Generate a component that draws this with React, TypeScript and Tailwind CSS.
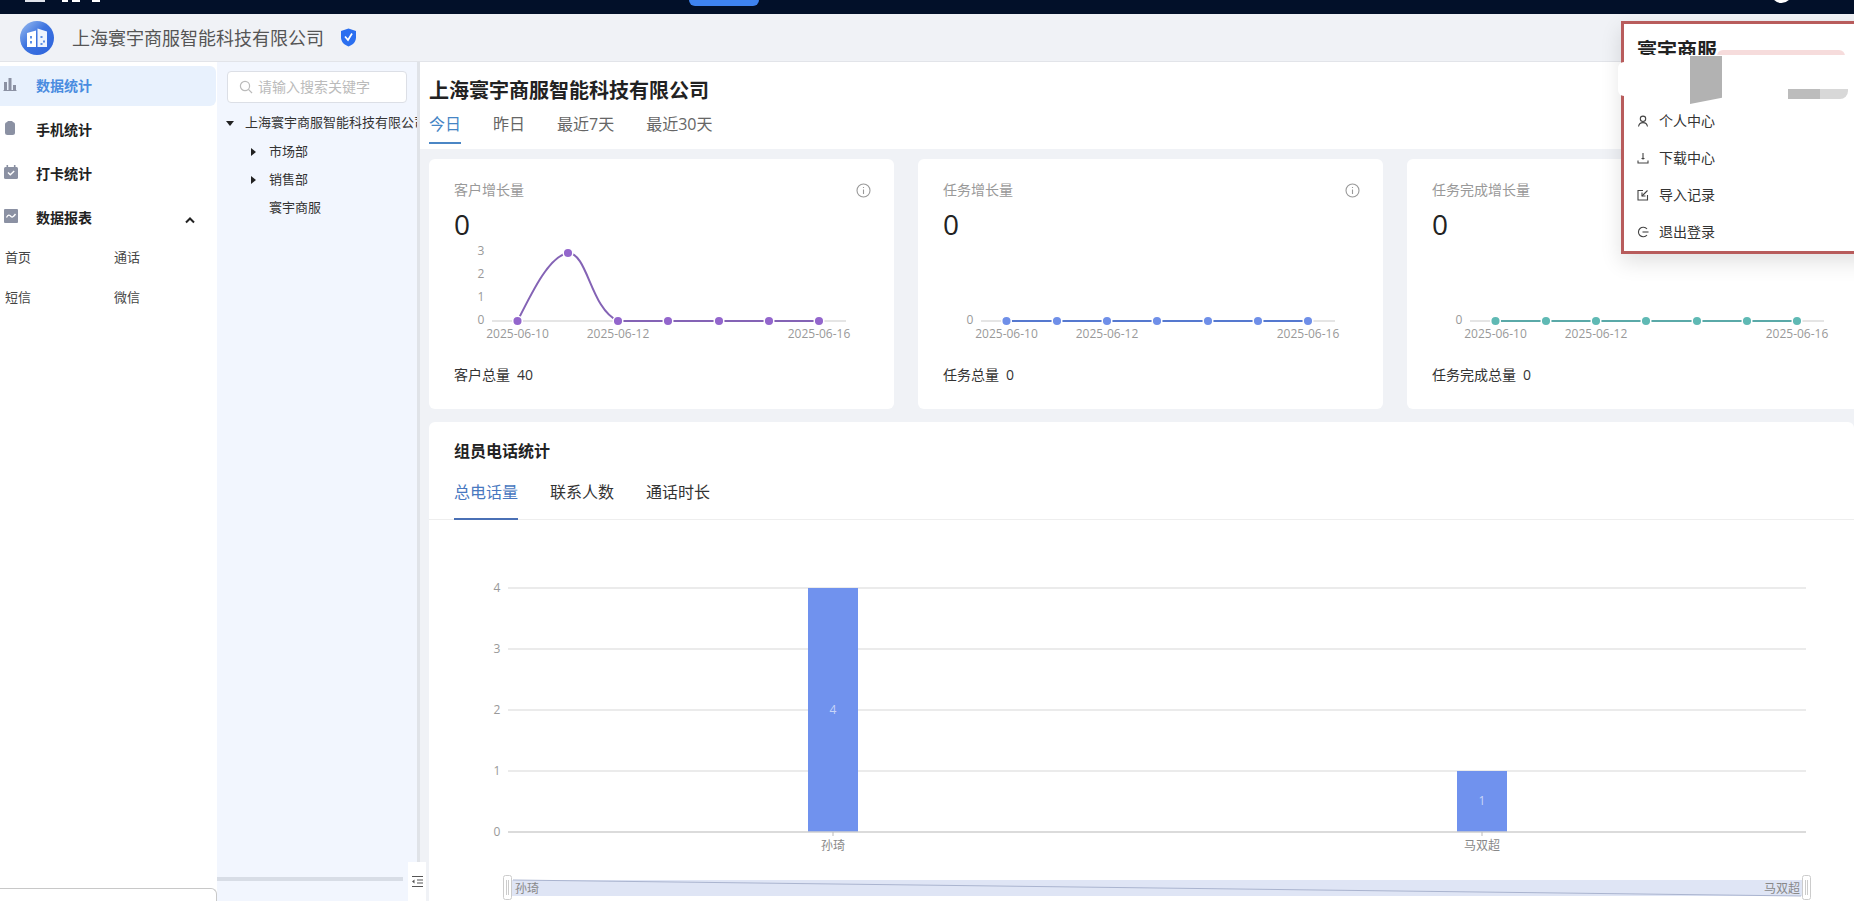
import type { ReactNode } from "react"

const font = "font-['Open_Sans','Noto_Sans_CJK_SC',sans-serif]"

function BarIcon() {
  return (
    <svg width="14" height="14" viewBox="0 0 14 14" className="fill-[#8b91a3]">
      <rect x="1" y="5" width="3" height="8" />
      <rect x="5.5" y="1" width="3" height="12" />
      <rect x="10" y="8" width="3" height="5" />
      <rect x="0.5" y="13" width="13" height="1" />
    </svg>
  )
}

function PhoneIcon() {
  return (
    <svg width="14" height="16" viewBox="0 0 14 16">
      <rect x="2" y="2" width="10" height="13" rx="2.5" fill="#8b91a3" />
      <rect x="4.5" y="1" width="5" height="1.6" fill="#8b91a3" />
    </svg>
  )
}

function CalendarIcon() {
  return (
    <svg width="16" height="16" viewBox="0 0 16 16">
      <rect x="1" y="3" width="14" height="12" rx="1.5" fill="#8b91a3" />
      <rect x="3.5" y="1" width="1.6" height="3" fill="#8b91a3" />
      <rect x="10.9" y="1" width="1.6" height="3" fill="#8b91a3" />
      <path d="M5 8.5 L7.3 10.8 L11.2 7" stroke="#fff" strokeWidth="1.4" fill="none" />
    </svg>
  )
}

function TrendIcon() {
  return (
    <svg width="16" height="16" viewBox="0 0 16 16">
      <rect x="1" y="1" width="14" height="14" rx="1" fill="#8b91a3" />
      <path d="M3.5 9.5 C5 6.5 6.5 6.5 8 8.5 C9.5 10 11 8 12.5 6" stroke="#fff" strokeWidth="1.3" fill="none" />
    </svg>
  )
}

function SideItem({ icon, label, active, children }: { icon: ReactNode; label: string; active?: boolean; children?: ReactNode }) {
  return (
    <div className={`flex h-10 items-center rounded-r-md ${active ? "bg-[#e8f1fd] text-[#4a8ce0]" : "text-[#222]"}`}>
      <span className="flex w-[36px] shrink-0 justify-start pb-1 pl-[3px]">{icon}</span>
      <span className="text-sm font-bold">{label}</span>
      {children}
    </div>
  )
}

function InfoIcon() {
  return (
    <svg width="15" height="15" viewBox="0 0 15 15" fill="none" stroke="#999" strokeWidth="1.1" className="-mr-[2px]">
      <circle cx="7.5" cy="7.5" r="6.5" />
      <path d="M7.5 6.5V11" />
      <path d="M7.5 4V5" />
    </svg>
  )
}

const dotXs = [517.5, 568, 618, 668, 719, 769, 819]

function MiniChart({ color, line, path, peak }: { color: string; line: string; path?: string; peak?: boolean }) {
  return (
    <svg viewBox="429 248 465 100" width="465" height="100" className="-ml-[25px] block overflow-visible">
      <line x1="492" x2="846" y1="321" y2="321" stroke="#dcdcdc" strokeWidth="1.5" />
      {peak ? (
        <g fill="#999" fontSize="12" textAnchor="middle">
          <text x="481" y="255">3</text>
          <text x="481" y="278">2</text>
          <text x="481" y="301">1</text>
        </g>
      ) : null}
      <text x="481" y="324" fill="#999" fontSize="12" textAnchor="middle">0</text>
      <path d={path ?? "M517.5 321H819"} fill="none" stroke={line} strokeWidth="2" />
      {dotXs.map((x, i) => (
        <circle key={x} cx={x} cy={peak && i === 1 ? 253 : 321} r="4.8" fill={color} stroke="#fff" strokeWidth="1.5" />
      ))}
      <g fill="#999" fontSize="12" textAnchor="middle">
        <text x="517.5" y="338">2025-06-10</text>
        <text x="618" y="338">2025-06-12</text>
        <text x="819" y="338">2025-06-16</text>
      </g>
    </svg>
  )
}

function StatCard({ title, totalLabel, total, children }: { title: string; totalLabel: string; total: string; children: ReactNode }) {
  return (
    <div className="h-[250px] w-[465px] shrink-0 rounded-md bg-white px-[25px] pt-[21px]">
      <div className="flex h-5 items-center justify-between text-sm text-[#999]">
        <span>{title}</span>
        <InfoIcon />
      </div>
      <div className="mt-[2px] mb-[2px] h-11 text-[28px] leading-[44px] text-[#222]">0</div>
      {children}
      <div className="mt-[17px] flex gap-[7px] text-sm leading-5 text-[#333]">
        <span>{totalLabel}</span>
        <span>{total}</span>
      </div>
    </div>
  )
}

function BarChart() {
  const grid = [
    { label: "4", y: 588 },
    { label: "3", y: 649 },
    { label: "2", y: 710 },
    { label: "1", y: 771 },
  ]
  return (
    <svg viewBox="429 520 1425 381" width="1425" height="381" className="block">
      {grid.map((g) => (
        <g key={g.label}>
          <line x1="508" x2="1806" y1={g.y} y2={g.y} stroke="#e4e4e4" strokeWidth="1.5" />
          <text x="497" y={g.y + 4} fill="#999" fontSize="12" textAnchor="middle">{g.label}</text>
        </g>
      ))}
      <rect x="808" y="588" width="50" height="244" fill="#7092ee" />
      <rect x="1457" y="771" width="50" height="61" fill="#7092ee" />
      <text x="833" y="714" fill="#c8d5f8" fontSize="12" textAnchor="middle">4</text>
      <text x="1482" y="805" fill="#c8d5f8" fontSize="12" textAnchor="middle">1</text>
      <line x1="508" x2="1806" y1="832" y2="832" stroke="#cfcfcf" strokeWidth="1.5" />
      <text x="497" y="836" fill="#999" fontSize="12" textAnchor="middle">0</text>
      <line x1="833" x2="833" y1="832" y2="836" stroke="#bbb" />
      <line x1="1482" x2="1482" y1="832" y2="836" stroke="#bbb" />
      <text x="833" y="850" fill="#888" fontSize="12" textAnchor="middle">孙琦</text>
      <text x="1482" y="850" fill="#888" fontSize="12" textAnchor="middle">马双超</text>
      <rect x="508" y="880" width="1298" height="16" fill="#dfe5f5" />
      <path d="M513 880 L1801 896" stroke="#aab4cf" strokeWidth="1" />
      <text x="515" y="893" fill="#888" fontSize="12">孙琦</text>
      <text x="1800" y="893" fill="#888" fontSize="12" textAnchor="end">马双超</text>
      <rect x="503.5" y="875.5" width="8" height="24" rx="2" fill="#fff" stroke="#ccc" />
      <path d="M506.5 880V895M508.5 880V895" stroke="#ccc" />
      <rect x="1802.5" y="875.5" width="8" height="24" rx="2" fill="#fff" stroke="#ccc" />
      <path d="M1805.5 880V895M1807.5 880V895" stroke="#ccc" />
    </svg>
  )
}

function MenuIcon({ children }: { children: ReactNode }) {
  return (
    <svg width="12" height="12" viewBox="0 0 12 12" fill="none" stroke="#444" strokeWidth="1.1">
      {children}
    </svg>
  )
}

function MenuRow({ icon, label }: { icon: ReactNode; label: string }) {
  return (
    <div className="flex h-[37px] items-center gap-[10px] text-sm text-[#333]">
      <span className="flex w-[12px] justify-center">{icon}</span>
      <span>{label}</span>
    </div>
  )
}

export default function App() {
  return (
    <div className={`relative h-[901px] w-[1854px] overflow-hidden bg-[#f0f2f6] ${font}`}>
      <div className="relative h-[14px] bg-[#021029]">
        <div className="absolute left-[25px] top-0 flex gap-[4px]">
          <span className="mr-[13px] h-[1.5px] w-[20px] bg-[#dfe3ea]" />
          <span className="h-[1.5px] w-[6px] bg-white" />
          <span className="mr-[8px] h-[1.5px] w-[8px] bg-white" />
          <span className="h-[1.5px] w-[8px] bg-white" />
        </div>
        <div className="absolute left-[689px] top-0 h-[6px] w-[70px] rounded-b-md bg-[#3e83f0]" />
        <div className="absolute left-[1771px] top-[-18px] h-[21px] w-[21px] rounded-full bg-white" />
      </div>

      <header className="flex h-[48px] items-center border-b border-[#e2e4e9] pl-[20px]">
        <svg width="34" height="34" viewBox="0 0 34 34">
          <defs>
            <linearGradient id="logo" x1="0" y1="0" x2="1" y2="1">
              <stop offset="0" stopColor="#9fc0f0" />
              <stop offset="0.45" stopColor="#3d74e0" />
              <stop offset="1" stopColor="#2c62dc" />
            </linearGradient>
          </defs>
          <circle cx="17" cy="17" r="17" fill="url(#logo)" />
          <path d="M7 12L16 9.5V26H7Z" fill="#fff" />
          <path d="M17.5 7.5L27 10.5V26H17.5Z" fill="#fff" fillOpacity="0.92" />
          <rect x="10" y="15" width="2" height="2.5" fill="#5d8fe6" />
          <rect x="10" y="20" width="2" height="2.5" fill="#5d8fe6" />
          <rect x="20.5" y="15" width="2" height="2" fill="#5d8fe6" />
          <rect x="23" y="19.5" width="2" height="2" fill="#5d8fe6" />
          <rect x="20.5" y="22" width="2" height="2" fill="#5d8fe6" />
        </svg>
        <span className="ml-[18px] text-lg text-[#555]">上海寰宇商服智能科技有限公司</span>
        <svg width="17" height="19" viewBox="0 0 17 19" className="ml-[16px]">
          <path d="M8.5 0.5L16 3V9.5C16 14 12.5 17 8.5 18.5C4.5 17 1 14 1 9.5V3Z" fill="#2b6ff0" />
          <path d="M5 8.5L8 12L12 5.5" stroke="#fff" strokeWidth="1.7" fill="none" />
        </svg>
      </header>

      <div className="flex h-[839px]">
        <aside className="flex w-[217px] shrink-0 flex-col bg-white pt-1">
          <div className="flex flex-col gap-1 pr-px">
            <SideItem icon={<BarIcon />} label="数据统计" active />
            <SideItem icon={<PhoneIcon />} label="手机统计" />
            <SideItem icon={<CalendarIcon />} label="打卡统计" />
            <SideItem icon={<TrendIcon />} label="数据报表">
              <svg width="12" height="8" viewBox="0 0 12 8" className="ml-[92px] mt-[3px]" fill="none" stroke="#222" strokeWidth="2">
                <path d="M2 6.5L6 2.5L10 6.5" />
              </svg>
            </SideItem>
          </div>
          <div className="grid grid-cols-[109px_1fr] text-[13px] text-[#444]">
            <span className="flex h-10 items-center pl-[5px]">首页</span>
            <span className="flex h-10 items-center pl-[5px]">通话</span>
            <span className="flex h-10 items-center pl-[5px]">短信</span>
            <span className="flex h-10 items-center pl-[5px]">微信</span>
          </div>
          <div className="mt-auto h-[13px] rounded-tr-md border-t border-r border-[#c8c8c8]" />
        </aside>

        <section className="relative w-[201px] shrink-0 overflow-hidden bg-[#f2f6fe] pt-[9px]">
          <div className="mx-[10px] flex h-8 w-[180px] items-center gap-[5px] rounded border border-[#dcdfe6] bg-white pl-[11px] text-sm text-[#bbb]">
            <svg width="14" height="14" viewBox="0 0 14 14" fill="none" stroke="#bbb" strokeWidth="1.2">
              <circle cx="6" cy="6" r="4.6" />
              <path d="M9.4 9.4L13 13" />
            </svg>
            <span>请输入搜索关键字</span>
          </div>
          <div className="mt-[5px] text-[13px] text-[#333]">
            <div className="flex h-[30px] items-center overflow-hidden whitespace-nowrap pl-[9px]">
              <span className="mr-[11px] h-0 w-0 shrink-0 border-x-[4px] border-t-[5px] border-x-transparent border-t-[#222]" />
              <span>上海寰宇商服智能科技有限公司</span>
            </div>
            <div className="flex h-[28px] items-center pl-[34px]">
              <span className="mr-[13px] h-0 w-0 border-y-[4px] border-l-[5px] border-y-transparent border-l-[#222]" />
              <span>市场部</span>
            </div>
            <div className="flex h-[28px] items-center pl-[34px]">
              <span className="mr-[13px] h-0 w-0 border-y-[4px] border-l-[5px] border-y-transparent border-l-[#222]" />
              <span>销售部</span>
            </div>
            <div className="flex h-[28px] items-center pl-[52px]">寰宇商服</div>
          </div>
          <div className="absolute bottom-[20px] left-0 h-[4px] w-[186px] bg-[#d8dde6]" />
        </section>

        <main className="relative min-w-0 flex-1">
          <div className="absolute left-[-1px] top-0 h-full w-[3px] bg-[#e0e3e8]" />
          <div className="absolute bottom-0 left-[-10px] z-10 flex h-[39px] w-[18px] items-center justify-center bg-white">
            <svg width="13" height="13" viewBox="0 0 13 13" stroke="#555" strokeWidth="1.2" fill="#555">
              <path d="M1 1.5H12M6 5H12M6 8H12M1 11.5H12" fill="none" />
              <path d="M3.5 4.5L1 6.5L3.5 8.5Z" strokeWidth="0" />
            </svg>
          </div>

          <div className="ml-[2px] h-[87px] bg-white pl-[9px] pt-[15px]">
            <h1 className="text-xl font-bold leading-7 text-[#222]">上海寰宇商服智能科技有限公司</h1>
            <div className="mt-[5px] flex gap-8 text-base text-[#666]">
              <div className="flex h-[34px] flex-col justify-between text-[#4585c5]">
                <span className="leading-[28px]">今日</span>
                <span className="h-[2px] bg-[#4a86c5]" />
              </div>
              <span className="leading-[28px]">昨日</span>
              <span className="leading-[28px]">最近7天</span>
              <span className="leading-[28px]">最近30天</span>
            </div>
          </div>

          <div className="ml-[11px] mt-[10px] flex gap-6">
            <StatCard title="客户增长量" totalLabel="客户总量" total="40">
              <MiniChart color="#9366cc" line="#8463b5" peak path="M517.5 321 C534 288 550 256 568 253 C588 253 590 308 618 321 H819" />
            </StatCard>
            <StatCard title="任务增长量" totalLabel="任务总量" total="0">
              <MiniChart color="#6f8fe8" line="#5578cf" />
            </StatCard>
            <StatCard title="任务完成增长量" totalLabel="任务完成总量" total="0">
              <MiniChart color="#5fb9b4" line="#5aa9a8" />
            </StatCard>
          </div>

          <div className="ml-[11px] mt-[13px] h-[479px] rounded-t-md bg-white">
            <div className="h-[98px] border-b border-[#eeeeee] pl-[25px] pt-[17px]">
              <h2 className="text-base font-bold leading-6 text-[#222]">组员电话统计</h2>
              <div className="mt-[17px] flex gap-8 text-base text-[#333]">
                <div className="flex h-[40px] flex-col justify-between text-[#4878c0]">
                  <span className="leading-6">总电话量</span>
                  <span className="h-[2px] bg-[#4a70b5]" />
                </div>
                <span className="leading-6">联系人数</span>
                <span className="leading-6">通话时长</span>
              </div>
            </div>
            <BarChart />
          </div>
        </main>
      </div>

      <div className="absolute left-[1621px] top-[21px] h-[233px] w-[260px] border-[3px] border-[#b85c5c] bg-white pl-[13px] pt-[13px] shadow-[0_8px_20px_rgba(0,0,0,0.12)]">
        <div className="h-[65px] text-xl font-bold leading-7 text-[#222]">寰宇商服</div>
        <div className="relative z-10">
          <MenuRow
            label="个人中心"
            icon={
              <MenuIcon>
                <circle cx="6" cy="3.8" r="2.7" />
                <path d="M1.5 11.5C2 8.8 4 7.6 6 7.6C8 7.6 10 8.8 10.5 11.5" />
              </MenuIcon>
            }
          />
          <MenuRow
            label="下载中心"
            icon={
              <MenuIcon>
                <path d="M6 1V7.5" />
                <path d="M4.5 6.5H7.5" />
                <path d="M1 8.5V11H11V8.5" />
              </MenuIcon>
            }
          />
          <MenuRow
            label="导入记录"
            icon={
              <MenuIcon>
                <path d="M6 1.5H1V11H10.5V6" />
                <path d="M10.5 1.5L5 7" />
                <path d="M5 3.5V7H8.5" />
              </MenuIcon>
            }
          />
          <MenuRow
            label="退出登录"
            icon={
              <MenuIcon>
                <path d="M10 3A4.8 4.8 0 1 0 10 9" />
                <path d="M5.5 6H11.5" />
              </MenuIcon>
            }
          />
        </div>
        <div className="absolute left-[-6px] top-[38px] h-[34px] w-[12px] rounded-full bg-white" />
        <div className="absolute left-[93px] top-[26px] h-[6px] w-[128px] rounded-t-full bg-[#f6dcdc]" />
        <div className="absolute left-0 top-[31px] h-[50px] w-[228px] rounded-br-[14px] bg-white" />
        <div className="absolute left-[66px] top-[32px] h-[48px] w-[32px] bg-[#b2b2b2] [clip-path:polygon(0_0,100%_0,100%_87%,0_100%)]" />
        <div className="absolute left-[164px] top-[65px] h-[10px] w-[32px] bg-[#bcbcbc]" />
        <div className="absolute left-[196px] top-[65px] h-[10px] w-[28px] rounded-br-lg bg-[#d8d8d8]" />
      </div>
    </div>
  )
}
